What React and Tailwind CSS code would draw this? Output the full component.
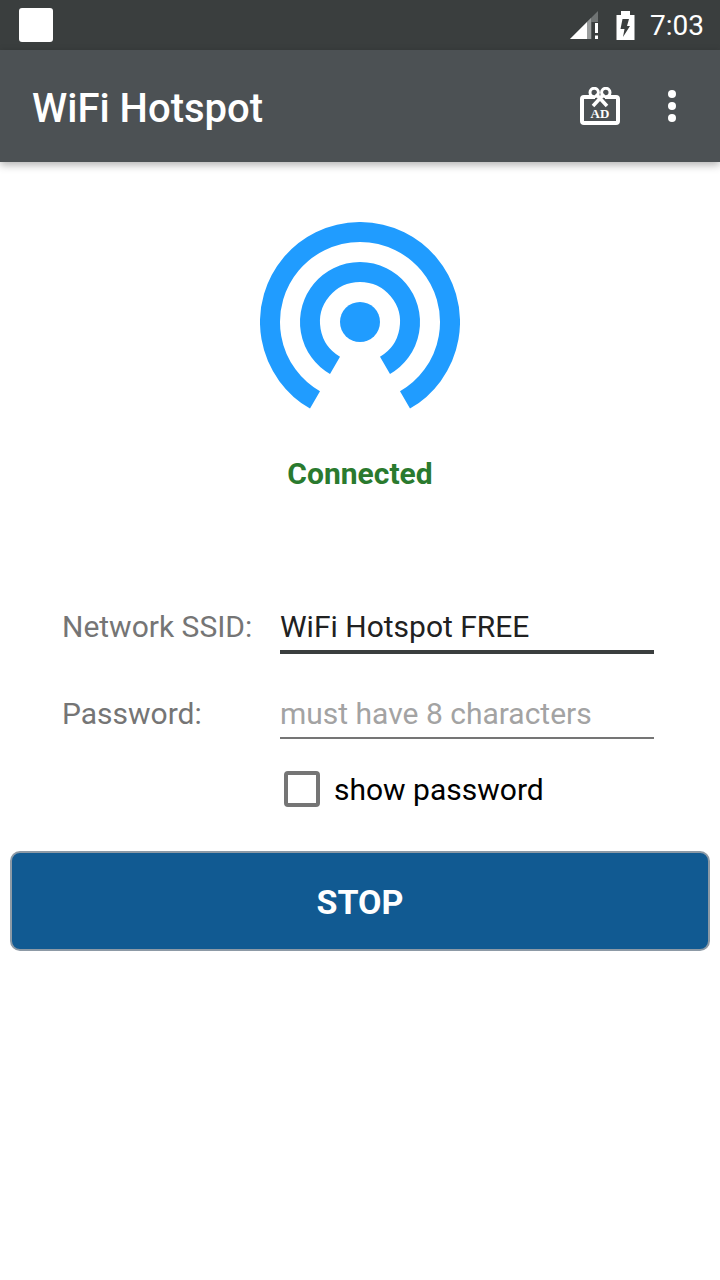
import { useState } from "react";

function HotspotIcon() {
  return (
    <svg width="200" height="190" viewBox="0 0 200 190" fill="none" stroke="#209cff" strokeWidth="20">
      <circle cx="100" cy="100" r="20" fill="#209cff" stroke="none" />
      <path d="M75 143.3A50 50 0 1 1 125 143.3" />
      <path d="M55 177.94A90 90 0 1 1 145 177.94" />
    </svg>
  );
}

function AdIcon() {
  return (
    <svg width="40" height="38" viewBox="0 0 40 38" fill="none">
      <rect x="2" y="10" width="36" height="26" rx="2" stroke="#fff" strokeWidth="4" />
      <path d="M15 8h10v6H15z" fill="#4c5154" />
      <circle cx="14.200" cy="5.500" r="4.200" stroke="#fff" strokeWidth="3" fill="#4c5154" />
      <circle cx="25.800" cy="5.500" r="4.200" stroke="#fff" strokeWidth="3" fill="#4c5154" />
      <path d="M13 19L24 7M27 19L16 7" stroke="#fff" strokeWidth="3.500" />
      <text x="20" y="31" textAnchor="middle" fill="#fff" fontSize="13" fontWeight="700" fontFamily="'Liberation Serif', serif">
        AD
      </text>
    </svg>
  );
}

function SignalIcon() {
  return (
    <svg width="30" height="30" viewBox="0 0 30 30">
      <path d="M0 29L28 1V29Z" fill="#6f7373" />
      <path d="M17 12L21 8V29H17Z" fill="#9a9d9d" />
      <path d="M0 29L17 12V29Z" fill="#fff" />
      <path d="M21.500 12H30V30H21.500Z" fill="#3a3e3e" />
      <path d="M25 13h3v10h-3zM25 25.500h3v3.500h-3z" fill="#fff" />
    </svg>
  );
}

function BatteryIcon() {
  return (
    <svg width="19" height="29" viewBox="0 0 19 29">
      <path d="M5 0h9v4h4.500v25H.500V4H5Z" fill="#fff" />
      <path d="M6.500 8H13l-2 7h3L7 26l1.500-8h-4Z" fill="#3a3e3e" />
    </svg>
  );
}

export default function App() {
  const [showPassword, setShowPassword] = useState(false);

  return (
    <div className="flex h-[1280px] flex-col bg-white font-['Roboto',sans-serif]">
      <div className="flex h-[50px] items-center bg-[#3a3e3e] pl-[19px] pr-4">
        <div className="h-[34px] w-[34px] rounded-[3px] bg-white" />
        <div className="ml-auto flex items-center">
          <SignalIcon />
          <div className="ml-4 mr-[15px]">
            <BatteryIcon />
          </div>
          <span className="pt-[2px] text-[28px] leading-none text-white">7:03</span>
        </div>
      </div>

      <div className="flex h-[112px] items-center bg-[#4c5154] pl-8 pr-11 shadow-[0_3px_8px_rgba(0,0,0,0.3)]">
        <h1 className="pt-[6px] text-[40px] font-medium text-white">WiFi Hotspot</h1>
        <div className="ml-auto flex items-center gap-12">
          <AdIcon />
          <div className="flex flex-col gap-1">
            <div className="h-2 w-2 rounded-full bg-white" />
            <div className="h-2 w-2 rounded-full bg-white" />
            <div className="h-2 w-2 rounded-full bg-white" />
          </div>
        </div>
      </div>

      <div className="flex flex-col items-center pt-[60px]">
        <HotspotIcon />
        <p className="mt-[42px] text-[30px] font-bold leading-[40px] text-[#2a7a2e]">Connected</p>
      </div>

      <div className="mt-[111px] flex flex-col pl-[62px] pr-[66px]">
        <div className="flex items-end">
          <span className="w-[218px] pb-[5px] text-[30px] leading-[44px] text-[#757575]">Network SSID:</span>
          <span className="flex-1 border-b-4 border-[#3a3e3e] pb-[1px] text-[30px] leading-[44px] text-[#212121]">
            WiFi Hotspot FREE
          </span>
        </div>
        <div className="mt-[38px] flex items-end">
          <span className="w-[218px] pb-[3px] text-[30px] leading-[44px] text-[#757575]">Password:</span>
          <span className="flex-1 border-b-2 border-[#757575] pb-[1px] text-[30px] leading-[44px] text-[#a3a3a3]">
            must have 8 characters
          </span>
        </div>
        <label className="ml-[222px] mt-8 flex h-9 items-center gap-[14px]">
          <input
            type="checkbox"
            checked={showPassword}
            onChange={(e) => setShowPassword(e.target.checked)}
            className="h-9 w-9 appearance-none rounded border-4 border-[#757575] bg-white"
          />
          <span className="pt-[2px] text-[30px] leading-none text-black">show password</span>
        </label>
      </div>

      <div className="mt-[44px] px-[10px]">
        <button
          type="button"
          className="flex h-[100px] w-full items-center justify-center rounded-[10px] border-2 border-[#8d9aa6] bg-[#115a92] pt-[2px] text-[34px] font-bold text-white"
        >
          STOP
        </button>
      </div>
    </div>
  );
}
